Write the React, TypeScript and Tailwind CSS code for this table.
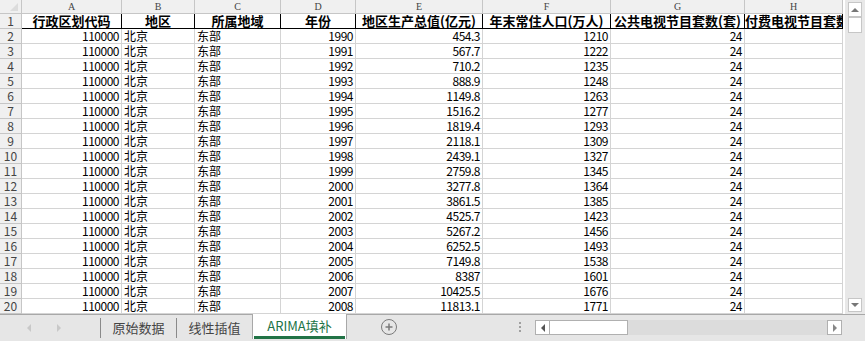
import React from "react";

const cols = [
  { l: "A", w: 100 },
  { l: "B", w: 73 },
  { l: "C", w: 86 },
  { l: "D", w: 75 },
  { l: "E", w: 127 },
  { l: "F", w: 128 },
  { l: "G", w: 134 },
  { l: "H", w: 98 },
];

const headers = [
  "行政区划代码",
  "地区",
  "所属地域",
  "年份",
  "地区生产总值(亿元)",
  "年末常住人口(万人)",
  "公共电视节目套数(套)",
  "付费电视节目套数",
];

const gdp = [
  "454.3", "567.7", "710.2", "888.9", "1149.8", "1516.2", "1819.4", "2118.1", "2439.1", "2759.8",
  "3277.8", "3861.5", "4525.7", "5267.2", "6252.5", "7149.8", "8387", "10425.5", "11813.1",
];
const pop = [
  1210, 1222, 1235, 1248, 1263, 1277, 1293, 1309, 1327, 1345, 1364, 1385, 1423, 1456, 1493, 1538, 1601,
  1676, 1771,
];

const font = { fontFamily: '"Noto Sans CJK SC", "DejaVu Sans", sans-serif' };

export default function App() {
  const template = "22px " + cols.map((c) => c.w + "px").join(" ");
  const rows = gdp.map((g, i) => [
    "110000",
    "北京",
    "东部",
    String(1990 + i),
    g,
    String(pop[i]),
    "24",
    "",
  ]);
  const align = ["r", "l", "l", "r", "r", "r", "r", "l"];

  return (
    <div
      className="w-[865px] h-[341px] overflow-hidden bg-white flex flex-col text-[#000]"
      style={font}
    >
      <div className="flex h-[314px]">
        <div className="w-[845px] overflow-hidden">
          <div className="grid" style={{ gridTemplateColumns: template }}>
            {/* corner */}
            <div className="h-[14px] bg-[#f0f0f0] border-r border-b border-[#c6c6c6] relative">
              <div className="absolute right-[3px] bottom-[2px] w-0 h-0 border-l-[8px] border-l-transparent border-b-[8px] border-b-[#dcdcdc]" />
            </div>
            {cols.map((c) => (
              <div
                key={c.l}
                className="h-[14px] bg-[#f0f0f0] border-r border-b border-[#c6c6c6] text-[10px] leading-[13px] text-[#444] text-center"
                style={{ fontFamily: '"Liberation Serif", serif' }}
              >
                {c.l}
              </div>
            ))}
            {/* row 1 */}
            <div className="h-[15px] bg-[#f0f0f0] border-r border-b border-[#c6c6c6] text-[12px] leading-[14px] text-[#444] text-center">
              1
            </div>
            {headers.map((h, i) => (
              <div
                key={i}
                className={
                  "h-[15px] border-r border-b border-[#000] text-[13px] leading-[14px] font-bold text-center whitespace-nowrap" +
                  (i === 7 ? " overflow-hidden" : "")
                }
              >
                {h}
              </div>
            ))}
            {rows.map((r, ri) => (
              <React.Fragment key={ri}>
                <div className="h-[15px] bg-[#f0f0f0] border-r border-b border-[#c6c6c6] text-[12px] leading-[14px] text-[#444] text-center">
                  {ri + 2}
                </div>
                {r.map((v, ci) => (
                  <div
                    key={ci}
                    className={
                      "h-[15px] border-r border-b border-[#d4d4d4] text-[12px] leading-[14px] whitespace-nowrap px-[2px] " +
                      (align[ci] === "r" ? "text-right tracking-[-0.5px]" : "text-left")
                    }
                  >
                    {v}
                  </div>
                ))}
              </React.Fragment>
            ))}
          </div>
        </div>
        {/* vertical scrollbar */}
        <div className="w-[20px] bg-[#e8e8e8] flex flex-col items-center pt-[2px] pb-[2px]">
          <div className="w-[14px] h-[15px] bg-white border border-[#c6c6c6] flex items-center justify-center">
            <div className="w-0 h-0 border-l-[4px] border-r-[4px] border-b-[4px] border-l-transparent border-r-transparent border-b-[#777]" />
          </div>
          <div className="w-[14px] h-[16px] bg-white border border-[#c6c6c6]" />
          <div className="flex-1" />
          <div className="w-[14px] h-[14px] bg-white border border-[#c6c6c6] flex items-center justify-center">
            <div className="w-0 h-0 border-l-[4px] border-r-[4px] border-t-[4px] border-l-transparent border-r-transparent border-t-[#777]" />
          </div>
        </div>
      </div>
      {/* tab bar */}
      <div className="h-[27px] bg-[#e6e6e6] border-t border-[#a8a8a8] flex items-start">
        <div className="w-[100px] h-[25px] flex items-center">
          <div className="ml-[27px] w-0 h-0 border-t-[4px] border-b-[4px] border-r-[4px] border-t-transparent border-b-transparent border-r-[#c8c8c8]" />
          <div className="ml-[26px] w-0 h-0 border-t-[4px] border-b-[4px] border-l-[4px] border-t-transparent border-b-transparent border-l-[#c8c8c8]" />
        </div>
        <div className="w-px h-[20px] bg-[#8a8a8a] mt-[3px]" />
        <div className="w-[75px] h-[25px] flex items-center justify-center text-[13px] text-[#444]">原始数据</div>
        <div className="w-px h-[20px] bg-[#8a8a8a] mt-[3px]" />
        <div className="w-[75px] h-[25px] flex items-center justify-center text-[13px] text-[#444]">线性插值</div>
        <div className="w-[95px] h-[25px] -mt-px bg-white border-l border-r border-[#a8a8a8] flex flex-col">
          <div className="flex-1 flex items-center justify-center text-[13px] text-[#217346] pt-[1px]">ARIMA填补</div>
          <div className="h-[3px] bg-[#217346] mx-[1px]" />
        </div>
        <div className="ml-[34px] mt-[4px] w-[16px] h-[16px] rounded-full border-[1.5px] border-[#7a7a7a] flex items-center justify-center">
          <svg width="10" height="10" viewBox="0 0 10 10">
            <path d="M5 1.5v7M1.5 5h7" stroke="#7a7a7a" strokeWidth="1.5" />
          </svg>
        </div>
        <div className="ml-[122px] mt-[7px] flex flex-col gap-[2px]">
          <div className="w-[2px] h-[2px] bg-[#a0a0a0]" />
          <div className="w-[2px] h-[2px] bg-[#a0a0a0]" />
          <div className="w-[2px] h-[2px] bg-[#a0a0a0]" />
        </div>
        <div className="ml-[14px] mt-[5px] w-[307px] h-[15px] bg-[#dcdcdc] flex">
          <div className="w-[15px] h-[15px] bg-white border border-[#b0b0b0] flex items-center justify-center">
            <div className="w-0 h-0 border-t-[4px] border-b-[4px] border-r-[4px] border-t-transparent border-b-transparent border-r-[#555]" />
          </div>
          <div className="w-[78px] h-[15px] bg-white border border-[#b0b0b0] border-l-0" />
          <div className="flex-1" />
          <div className="w-[15px] h-[15px] bg-white border border-[#b0b0b0] flex items-center justify-center">
            <div className="w-0 h-0 border-t-[4px] border-b-[4px] border-l-[4px] border-t-transparent border-b-transparent border-l-[#888]" />
          </div>
        </div>
      </div>
    </div>
  );
}
